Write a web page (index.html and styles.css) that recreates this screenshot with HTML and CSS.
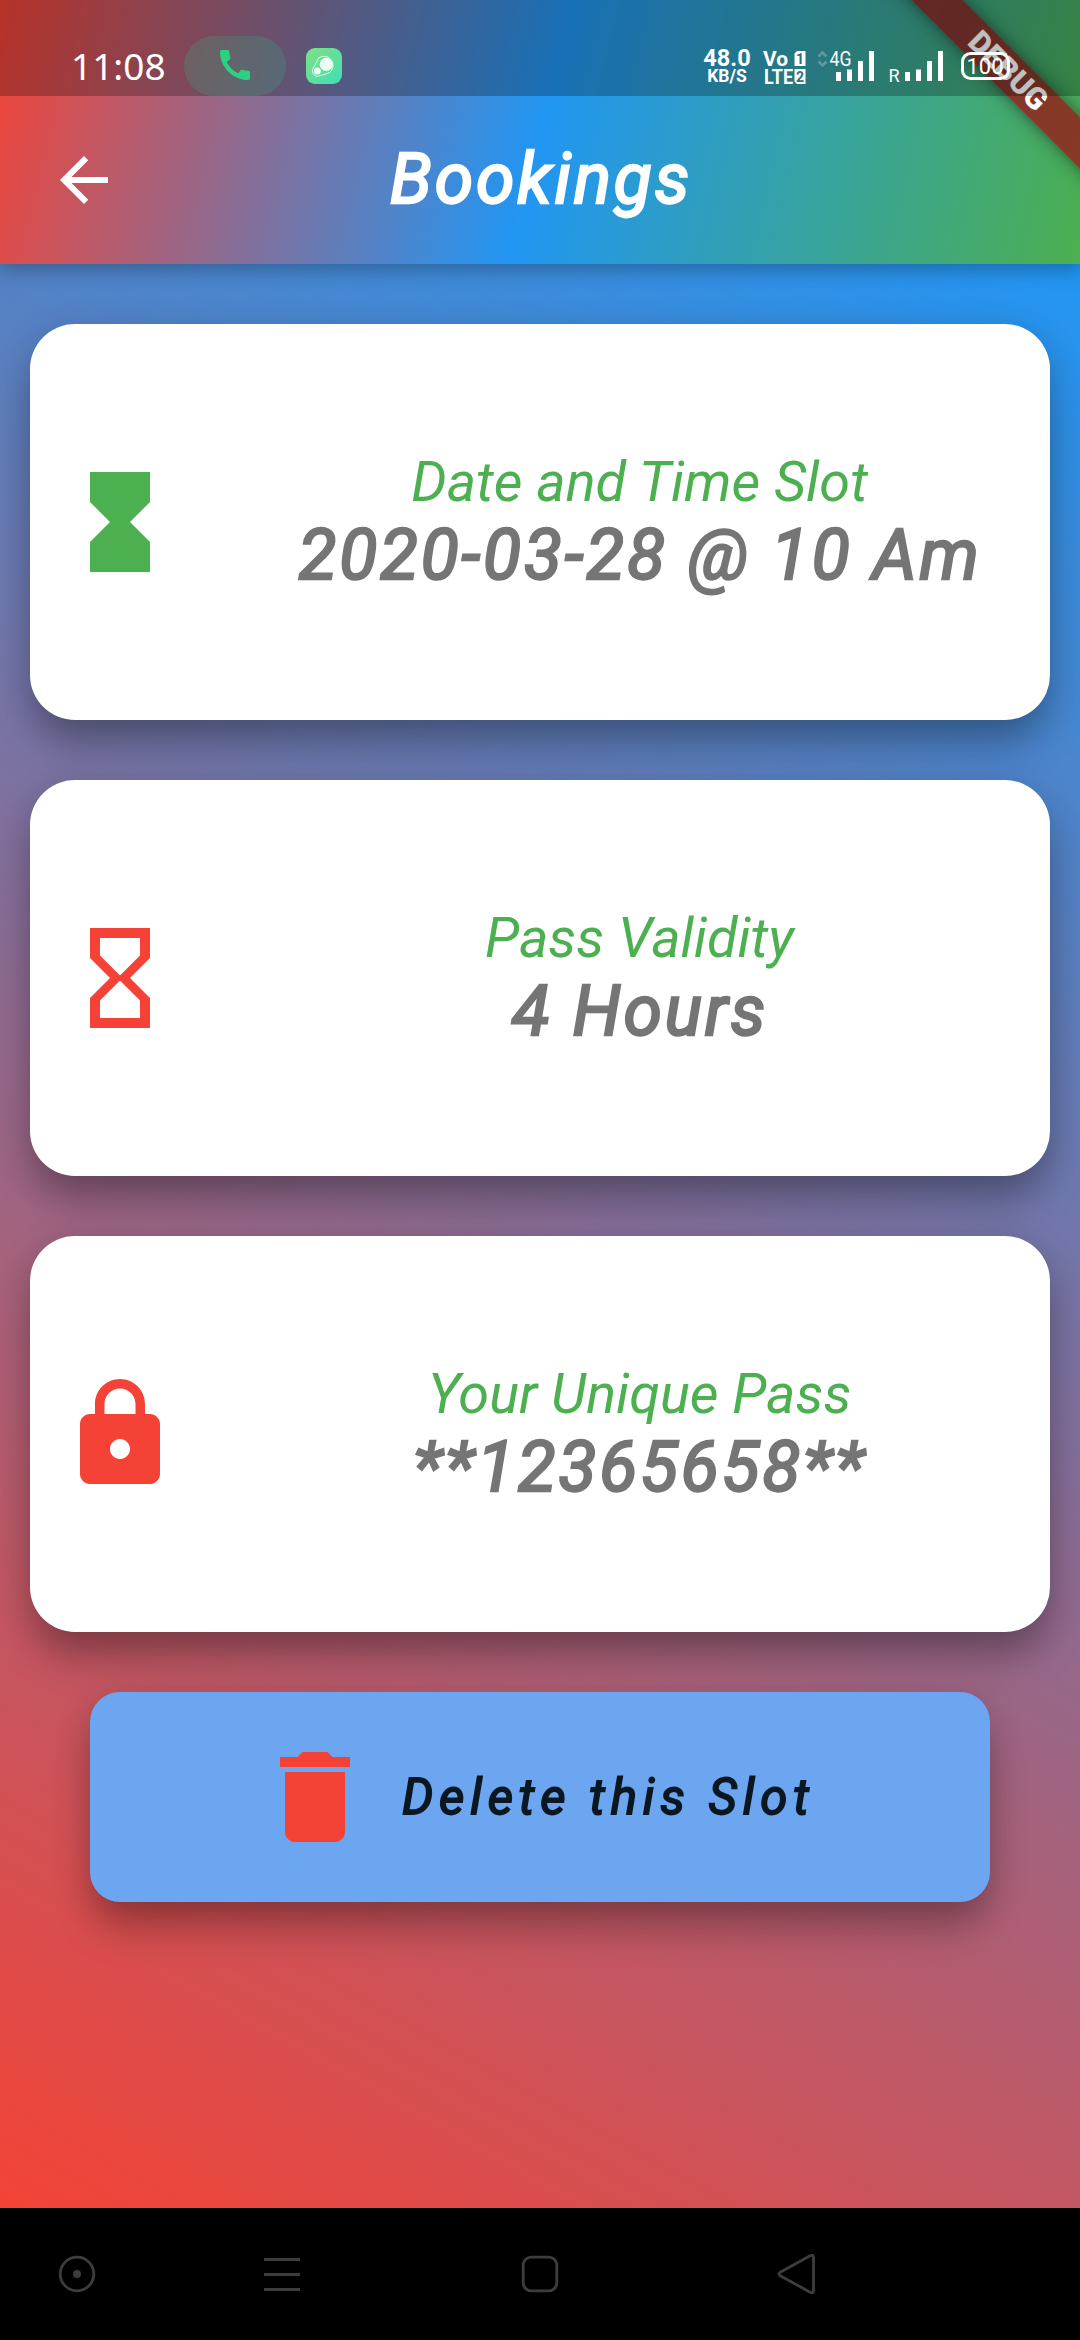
FILE: index.html
```
<!DOCTYPE html>
<html lang="en">
<head>
<meta charset="utf-8">
<title>Bookings</title>
<link rel="stylesheet" href="styles.css">
</head>
<body>
<div class="screen">
  <header class="appbar">
    <div class="toolbar">
      <svg class="back" viewBox="0 0 24 24"><path d="M20 11H7.83l5.59-5.59L12 4l-8 8 8 8 1.41-1.41L7.83 13H20v-2z"/></svg>
      <h1 class="title">Bookings</h1>
    </div>
    <div class="banner-clip"><div class="banner">DEBUG</div></div>
    <div class="status">
      <div class="status-left">
        <span class="clock">11:08</span>
        <span class="call-pill">
          <svg viewBox="0 0 24 24"><path d="M20.01 15.38c-1.23 0-2.42-.2-3.53-.56a.977.977 0 0 0-1.01.24l-1.57 1.97c-2.83-1.35-5.48-3.9-6.89-6.83l1.95-1.66c.27-.28.35-.67.24-1.02-.37-1.11-.56-2.3-.56-3.53 0-.54-.45-.99-.99-.99H4.19C3.65 3 3 3.24 3 3.99 3 13.28 10.73 21 20.01 21c.71 0 .99-.63.99-1.18v-3.45c0-.54-.45-.99-.99-.99z"/></svg>
        </span>
        <svg class="app-icon" viewBox="0 0 36 36">
          <defs><linearGradient id="ag" x1="0" y1="0" x2="1" y2="1"><stop offset="0" stop-color="#7fe083"/><stop offset="1" stop-color="#3fdfb8"/></linearGradient></defs>
          <rect width="36" height="36" rx="9" fill="url(#ag)"/>
          <path d="M12.8 9.8A9 9 0 1 1 23 25L12.5 28.2A5.3 5.3 0 0 1 6.6 21.4Z" fill="none" stroke="#e2fbea" stroke-width="1"/>
          <circle cx="20.3" cy="16.3" r="6.6" fill="#ecfdf3"/><circle cx="11.3" cy="23" r="3.5" fill="#ecfdf3"/>
        </svg>
      </div>
      <div class="status-right">
        <div class="speed"><span class="speed-value">48.0</span><span class="speed-unit">KB/S</span></div>
        <svg class="volte" viewBox="0 0 44 36">
          <text x="0" y="17.5" font-size="21" textLength="25" lengthAdjust="spacingAndGlyphs">Vo</text>
          <text x="1" y="35.5" font-size="20.5" textLength="29" lengthAdjust="spacingAndGlyphs">LTE</text>
          <path d="M34 3h8.5v15h-11v-12.5zM31.5 21h11v15h-8.5l-2.5-2.5z"/>
          <text class="cut" x="33" y="15.5" font-size="14">1</text>
          <text class="cut" x="33" y="33.5" font-size="14">2</text>
        </svg>
        <svg class="signal" viewBox="0 0 58 36">
          <path class="faint" d="M1.5 8.5l4-4 4 4M1.5 13.5l4 4 4-4"/>
          <text x="12.5" y="17.5" font-size="21" textLength="22" lengthAdjust="spacingAndGlyphs">4G</text>
          <path d="M19 24h5v9h-5zM30 21.5h5v11.5h-5zM41 13h5v20h-5zM52 3h5v30h-5z"/>
        </svg>
        <svg class="roaming" viewBox="0 0 58 36">
          <text x="1.5" y="34" font-size="18">R</text>
          <path d="M18 24h5v9h-5zM29 21.5h5v11.5h-5zM40 13h5v20h-5zM51 3h5v30h-5z"/>
        </svg>
        <svg class="battery" viewBox="0 0 52 36">
          <rect x="2.5" y="5.5" width="46" height="25" rx="8"/>
          <path d="M49 13.5q2.5 4.5 0 9z"/>
          <text x="6.5" y="26" font-size="22.5" textLength="37" lengthAdjust="spacingAndGlyphs">100</text>
        </svg>
      </div>
    </div>
  </header>

  <main class="content">
    <section class="card">
      <svg class="icon green" viewBox="0 0 24 24"><path d="M6 2v6l4 4-4 4v6h12v-6l-4-4 4-4V2z"/></svg>
      <div class="info"><p class="label">Date and Time Slot</p><p class="value">2020-03-28 @ 10 Am</p></div>
    </section>
    <section class="card">
      <svg class="icon red" viewBox="0 0 24 24"><path fill-rule="evenodd" d="M6 2v6l4 4-4 4v6h12v-6l-4-4 4-4V2zM16 16.5V20H8v-3.5l4-4zM12 11.5l-4-4V4h8v3.5z"/></svg>
      <div class="info"><p class="label">Pass Validity</p><p class="value">4 Hours</p></div>
    </section>
    <section class="card">
      <svg class="icon red" viewBox="0 0 24 24"><path d="M18 8h-1V6c0-2.76-2.24-5-5-5S7 3.24 7 6v2H6c-1.1 0-2 .9-2 2v10c0 1.1.9 2 2 2h12c1.1 0 2-.9 2-2V10c0-1.1-.9-2-2-2zm-6 9c-1.1 0-2-.9-2-2s.9-2 2-2 2 .9 2 2-.9 2-2 2zm3.1-9H8.9V6c0-1.71 1.39-3.1 3.1-3.1s3.1 1.39 3.1 3.1v2z"/></svg>
      <div class="info"><p class="label">Your Unique Pass</p><p class="value">**12365658**</p></div>
    </section>
    <button class="delete">
      <svg class="icon red" viewBox="0 0 24 24"><path d="M6 19c0 1.1.9 2 2 2h8c1.1 0 2-.9 2-2V7H6v12zM19 4h-3.5l-1-1h-5l-1 1H5v2h14V4z"/></svg>
      <span class="delete-text">Delete this Slot</span>
    </button>
  </main>

  <nav class="navbar">
    <svg viewBox="0 0 44 44"><circle cx="22" cy="22" r="16.8"/><circle class="dot" cx="22" cy="22" r="4"/></svg>
    <svg viewBox="0 0 44 44"><path d="M4 7.5h36M4 22.5h36M4 37.5h36"/></svg>
    <svg viewBox="0 0 44 44"><rect x="5.2" y="5.2" width="33.6" height="33.6" rx="8"/></svg>
    <svg viewBox="0 0 44 44"><path d="M4.8 20.5 35.5 3.600Q38.500 2.500 38.500 5.500V38.500Q38.500 41.500 35.500 40.400L4.800 23.500Q3 22 4.800 20.500Z"/></svg>
  </nav>
</div>
</body>
</html>
```
FILE: styles.css
```
* { box-sizing: border-box; }

body {
  margin: 0;
  font-family: Roboto, sans-serif;
}

h1, p { margin: 0; }

svg { display: block; flex: none; }

.screen {
  width: 1080px;
  height: 2340px;
  display: flex;
  flex-direction: column;
  overflow: hidden;
}

/* App bar */
.appbar {
  position: relative;
  z-index: 1;
  height: 264px;
  padding-top: 96px;
  background: linear-gradient(103.74deg, #f44336, #2196f3 50%, #4caf50);
  box-shadow: 0 10px 16px rgba(0, 0, 0, .17), 0 2px 14px rgba(0, 0, 0, .1);
}

.toolbar {
  height: 168px;
  display: grid;
  grid-template-columns: 72px 1fr 72px;
  align-items: center;
  padding: 0 48px;
}

.back {
  width: 72px;
  height: 72px;
  fill: #fff;
}

.title {
  color: #fff;
  text-align: center;
  font: italic 400 69.5px/82px Roboto, sans-serif;
  letter-spacing: 2.9px;
  padding-left: 2px;
  -webkit-text-stroke: 2.4px #fff;
}

.banner-clip {
  position: absolute;
  top: 0;
  right: 0;
  width: 300px;
  height: 264px;
  overflow: hidden;
}

.banner {
  position: absolute;
  left: 28px;
  top: 53px;
  width: 400px;
  height: 36px;
  transform: rotate(45deg);
  background: rgba(155, 18, 20, .75);
  box-shadow: 0 0 18px rgba(0, 0, 0, .5);
  color: #fff;
  text-align: center;
  font: 900 30.6px/36px Roboto, sans-serif;
}

/* Status bar, translucent over the app bar */
.status {
  position: absolute;
  inset: 0 0 auto 0;
  height: 96px;
  display: flex;
  justify-content: space-between;
  padding-top: 36px;
  background: rgba(0, 0, 0, .25);
  color: #fff;
}

.status-left {
  display: flex;
  padding-left: 71px;
}

.clock {
  width: 113px;
  font: 37px/60px "Noto Sans", sans-serif;
}

.call-pill {
  width: 102px;
  height: 60px;
  border-radius: 30px;
  padding: 9px 31px;
  background: rgba(60, 165, 125, .27);
}

.call-pill svg {
  width: 40px;
  height: 40px;
  fill: #2bd083;
}

.app-icon {
  width: 36px;
  height: 36px;
  margin: 12px 0 0 20px;
}

.status-right {
  display: flex;
  padding: 12px 68px 0 0;
  fill: #fff;
}

.status-right svg {
  height: 36px;
  overflow: visible;
}

.speed {
  width: 52px;
  margin-right: 10px;
  display: flex;
  flex-direction: column;
  align-items: center;
  font-weight: 700;
}

.speed-value { font-size: 23.5px; line-height: 20px; }
.speed-unit { font-size: 17.5px; line-height: 17px; }

.volte { width: 44px; font-weight: 700; margin-right: 10px; }
.volte .cut { fill: #27707f; }
.signal { width: 58px; margin-right: 12px; }
.signal .faint { fill: none; stroke: #fff; stroke-opacity: .25; stroke-width: 2.5; }
.roaming { width: 58px; margin-right: 15px; }
.battery { width: 52px; }
.battery rect { fill: none; stroke: #fff; stroke-width: 3; }

/* Booking cards */
.content {
  flex: 1;
  display: flex;
  flex-direction: column;
  gap: 60px;
  padding: 60px 30px 0;
  background: linear-gradient(29.05deg, #f44336, #2196f3);
}

.card {
  height: 396px;
  display: grid;
  grid-template-columns: 120px 1fr;
  gap: 79px;
  align-items: center;
  padding: 0 30px;
  border-radius: 45px;
  background: #fff;
}

.card, .delete {
  box-shadow: 0 30px 40px -6px rgba(0, 0, 0, .25), 0 8px 36px rgba(0, 0, 0, .16);
}

.icon {
  width: 120px;
  height: 120px;
}

.green { fill: #4caf50; }
.red { fill: #f44336; }

.info {
  text-align: center;
  white-space: nowrap;
  padding-top: 1px;
}

.label {
  color: #4caf50;
  font: italic 400 55.8px/66px Roboto, sans-serif;
}

.value {
  color: #757575;
  font: italic 400 69.5px/82px Roboto, sans-serif;
  letter-spacing: 2.9px;
  padding-left: 1px;
  -webkit-text-stroke: 2.4px #757575;
}

.delete {
  height: 210px;
  margin: 0 60px;
  display: flex;
  align-items: center;
  gap: 27px;
  padding: 0 0 0 165px;
  border: 0;
  border-radius: 30px;
  background: #6ca6f1;
  color: #0b1721;
  font: italic 400 49px/58px Roboto, sans-serif;
  letter-spacing: 5.9px;
  white-space: nowrap;
}

.delete-text {
  padding-top: 2px;
  -webkit-text-stroke: 1.8px #0b1721;
}

/* System navigation */
.navbar {
  height: 132px;
  display: grid;
  grid-template-columns: 205px 258px 257px 44px;
  align-items: center;
  padding-left: 55px;
  background: #000;
}

.navbar svg {
  width: 44px;
  height: 44px;
  fill: none;
  stroke: #3d3d3d;
  stroke-width: 2.8;
}

.navbar .dot { fill: #3d3d3d; stroke: none; }
```
